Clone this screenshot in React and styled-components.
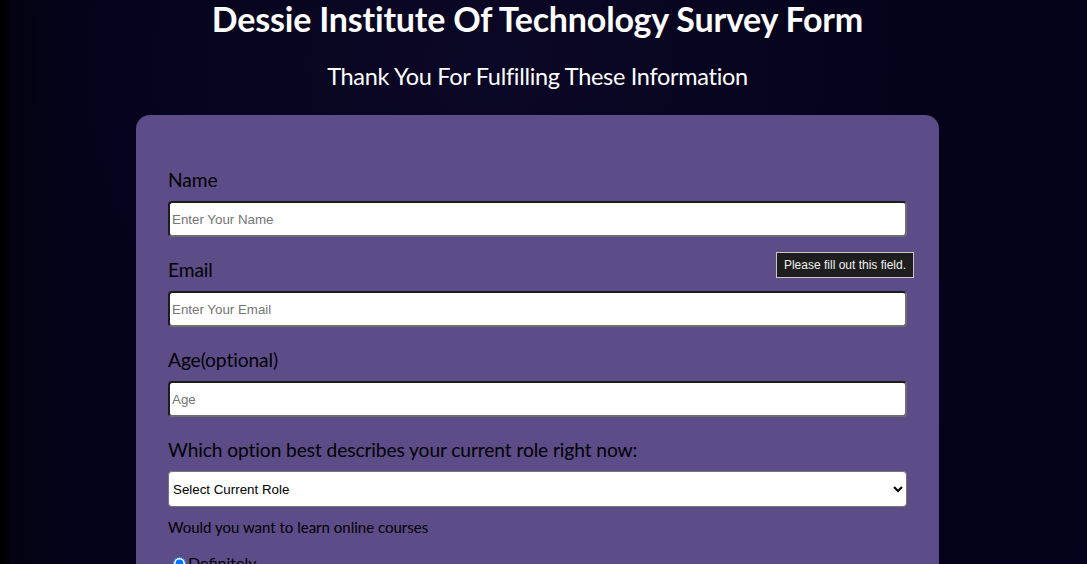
import styled, { createGlobalStyle } from "styled-components";

const GlobalStyle = createGlobalStyle`
  html, body {
    margin: 0;
    padding: 0;
  }
  body {
    min-height: 100vh;
    background-color: #05031a;
    background-image:
      linear-gradient(90deg, #000 0px, #03020f 12px, rgba(5, 3, 26, 0) 80px),
      radial-gradient(ellipse at 45% 10%, #0b0726 0%, #05031a 55%, #04021a 100%);
    font-family: "Gill Sans", "Lato", "Liberation Sans", sans-serif;
  }
`;

const App = () => {
  return (
    <>
      <GlobalStyle />
      <Page>
        <Title id="title">Dessie Institute Of Technology Survey Form</Title>
        <Description id="description">
          Thank You For Fulfilling These Information
        </Description>
        <Form id="survey-form">
          <Field>
            <Label htmlFor="name">Name</Label>
            <TextInput id="name" type="text" placeholder="Enter Your Name" />
            <Tooltip>Please fill out this field.</Tooltip>
          </Field>
          <Field>
            <Label htmlFor="email">Email</Label>
            <TextInput id="email" type="email" placeholder="Enter Your Email" />
          </Field>
          <Field>
            <Label htmlFor="number">Age(optional)</Label>
            <TextInput id="number" type="number" placeholder="Age" />
          </Field>
          <Field>
            <Label htmlFor="dropdown">
              Which option best describes your current role right now:
            </Label>
            <Select id="dropdown" defaultValue="">
              <option value="">Select Current Role</option>
              <option value="student">Student</option>
              <option value="job">Full Time Job</option>
              <option value="learner">Full Time Learner</option>
            </Select>
          </Field>
          <Question>Would you want to learn online courses</Question>
          <RadioRow>
            <input type="radio" name="learn" value="definitely" defaultChecked />
            Definitely
          </RadioRow>
          <RadioRow>
            <input type="radio" name="learn" value="maybe" />
            Maybe
          </RadioRow>
        </Form>
      </Page>
    </>
  );
};

const Page = styled.div`
  display: flex;
  flex-direction: column;
  align-items: center;
  padding-right: 12px;
  color: #fff;
`;

const Title = styled.h1`
  margin: 0;
  font-size: 34px;
  line-height: 38px;
  font-weight: 700;
  letter-spacing: -0.2px;
`;

const Description = styled.p`
  margin: 18px 0 0;
  font-size: 23.5px;
  line-height: 40px;
  letter-spacing: -0.3px;
`;

const Form = styled.form`
  box-sizing: border-box;
  width: 803px;
  margin-top: 19px;
  padding: 53px 32px 40px;
  background-color: #5c4c88;
  border-radius: 14px;
  color: #000;
`;

const Field = styled.div`
  position: relative;
  display: flex;
  flex-direction: column;
  margin-bottom: 21px;
`;

const Label = styled.label`
  font-size: 19.2px;
  line-height: 24px;
  margin-bottom: 9px;
  letter-spacing: -0.1px;
`;

const TextInput = styled.input`
  box-sizing: border-box;
  width: 100%;
  height: 36px;
  padding: 1px 2px;
  background: #fff;
  border-style: solid;
  border-width: 2px;
  border-color: #1c1c1c #6e6e6e #6e6e6e #1c1c1c;
  border-radius: 4px;
  font-family: "Liberation Sans", Arial, sans-serif;
  font-size: 13.33px;
  outline: none;
  -moz-appearance: textfield;

  &::placeholder {
    color: #757575;
  }
  &::-webkit-inner-spin-button,
  &::-webkit-outer-spin-button {
    -webkit-appearance: none;
    margin: 0;
  }
`;

const Select = styled.select`
  box-sizing: border-box;
  width: 100%;
  height: 36px;
  padding: 0;
  background: #fff;
  border: 1px solid #767676;
  border-radius: 4px;
  font-family: "Liberation Sans", Arial, sans-serif;
  font-size: 13.33px;
  color: #000;
`;

const Question = styled.p`
  margin: -11px 0 15px;
  font-size: 15px;
  line-height: 20px;
`;

const RadioRow = styled.label`
  display: flex;
  align-items: center;
  font-size: 16px;
  line-height: 22px;
  margin-left: 2px;

  input {
    margin: 0 2px 0 3px;
  }
`;

const Tooltip = styled.div`
  position: absolute;
  right: -7px;
  top: 84px;
  padding: 5px 7px 5px;
  background: #1e1e1e;
  border: 1px solid #c8c8c8;
  color: #f2f2f2;
  font-family: "Liberation Sans", Arial, sans-serif;
  font-size: 12px;
  line-height: 14px;
  white-space: nowrap;
  z-index: 2;
`;

export default App;
